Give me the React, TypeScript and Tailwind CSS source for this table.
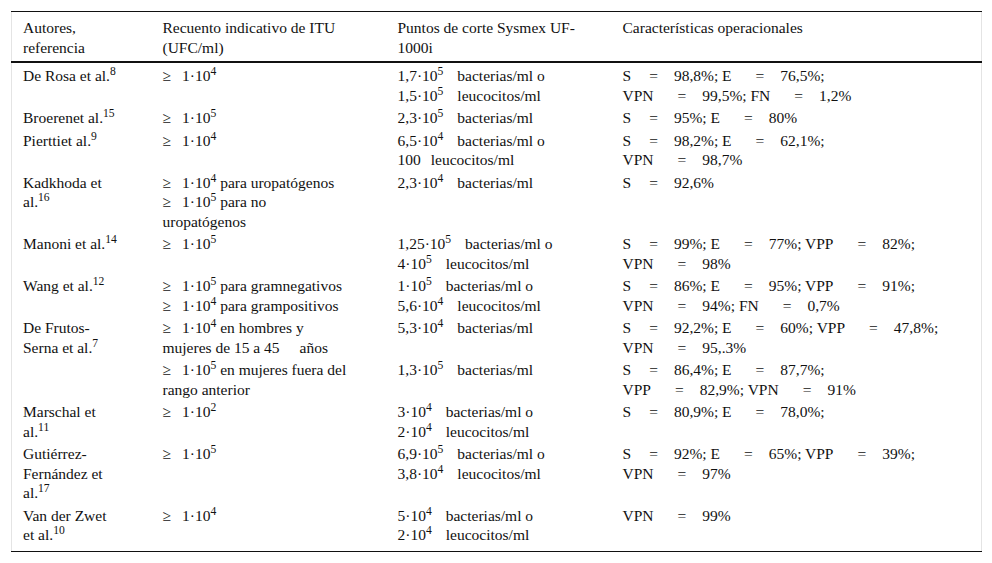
import React from "react";

const S = ({ children }: { children: React.ReactNode }) => <sup>{children}</sup>;
const Ge = () => <span className="inline-block w-[11px]" />;
const Gc = () => <span className="inline-block w-[14px]" />;
const GlS = () => <span className="inline-block w-[18px]" />;
const Gl = () => <span className="inline-block w-[24px]" />;
const Gr = () => <span className="inline-block w-[16px]" />;

const Eq = ({ l, r }: { l: string; r: string }) => (
  <>
    {l}
    {l === "S" ? <GlS /> : <Gl />}=<Gr />
    {r}
  </>
);

const Ge1 = ({ n, e, tail }: { n: string; e: string; tail?: string }) => (
  <>
    ≥<Ge />
    {n}·10<S>{e}</S>
    {tail}
  </>
);

const C3 = ({ n, e, w }: { n: string; e: string; w: string }) => (
  <>
    {n}·10<S>{e}</S>
    <Gc />
    {w}
  </>
);

type Row = React.ReactNode[][];

const rows: Row[] = [
  [
    [<>De Rosa et al.<S>8</S></>],
    [<Ge1 n="1" e="4" />],
    [<C3 n="1,7" e="5" w="bacterias/ml o" />, <C3 n="1,5" e="5" w="leucocitos/ml" />],
    [
      <><Eq l="S" r="98,8%" />; <Eq l="E" r="76,5%;" /></>,
      <><Eq l="VPN" r="99,5%" />; <Eq l="FN" r="1,2%" /></>,
    ],
  ],
  [
    [<>Broerenet al.<S>15</S></>],
    [<Ge1 n="1" e="5" />],
    [<C3 n="2,3" e="5" w="bacterias/ml" />],
    [<><Eq l="S" r="95%" />; <Eq l="E" r="80%" /></>],
  ],
  [
    [<>Pierttiet al.<S>9</S></>],
    [<Ge1 n="1" e="4" />],
    [<C3 n="6,5" e="4" w="bacterias/ml o" />, <>100<span className="inline-block w-[10px]" />leucocitos/ml</>],
    [<><Eq l="S" r="98,2%" />; <Eq l="E" r="62,1%;" /></>, <Eq l="VPN" r="98,7%" />],
  ],
  [
    [<>Kadkhoda et</>, <>al.<S>16</S></>],
    [<Ge1 n="1" e="4" tail=" para uropatógenos" />, <Ge1 n="1" e="5" tail=" para no" />, <>uropatógenos</>],
    [<C3 n="2,3" e="4" w="bacterias/ml" />],
    [<Eq l="S" r="92,6%" />],
  ],
  [
    [<>Manoni et al.<S>14</S></>],
    [<Ge1 n="1" e="5" />],
    [<C3 n="1,25" e="5" w="bacterias/ml o" />, <C3 n="4" e="5" w="leucocitos/ml" />],
    [
      <><Eq l="S" r="99%" />; <Eq l="E" r="77%" />; <Eq l="VPP" r="82%;" /></>,
      <Eq l="VPN" r="98%" />,
    ],
  ],
  [
    [<>Wang et al.<S>12</S></>],
    [<Ge1 n="1" e="5" tail=" para gramnegativos" />, <Ge1 n="1" e="4" tail=" para grampositivos" />],
    [<C3 n="1" e="5" w="bacterias/ml o" />, <C3 n="5,6" e="4" w="leucocitos/ml" />],
    [
      <><Eq l="S" r="86%" />; <Eq l="E" r="95%" />; <Eq l="VPP" r="91%;" /></>,
      <><Eq l="VPN" r="94%" />; <Eq l="FN" r="0,7%" /></>,
    ],
  ],
  [
    [<>De Frutos-</>, <>Serna et al.<S>7</S></>],
    [<Ge1 n="1" e="4" tail=" en hombres y" />, <>mujeres de 15 a 45<span className="inline-block w-[20px]" />años</>],
    [<C3 n="5,3" e="4" w="bacterias/ml" />],
    [
      <><Eq l="S" r="92,2%" />; <Eq l="E" r="60%" />; <Eq l="VPP" r="47,8%;" /></>,
      <Eq l="VPN" r="95,.3%" />,
    ],
  ],
  [
    [],
    [<Ge1 n="1" e="5" tail=" en mujeres fuera del" />, <>rango anterior</>],
    [<C3 n="1,3" e="5" w="bacterias/ml" />],
    [
      <><Eq l="S" r="86,4%" />; <Eq l="E" r="87,7%;" /></>,
      <><Eq l="VPP" r="82,9%" />; <Eq l="VPN" r="91%" /></>,
    ],
  ],
  [
    [<>Marschal et</>, <>al.<S>11</S></>],
    [<Ge1 n="1" e="2" />],
    [<C3 n="3" e="4" w="bacterias/ml o" />, <C3 n="2" e="4" w="leucocitos/ml" />],
    [<><Eq l="S" r="80,9%" />; <Eq l="E" r="78,0%;" /></>],
  ],
  [
    [<>Gutiérrez-</>, <>Fernández et</>, <>al.<S>17</S></>],
    [<Ge1 n="1" e="5" />],
    [<C3 n="6,9" e="5" w="bacterias/ml o" />, <C3 n="3,8" e="4" w="leucocitos/ml" />],
    [
      <><Eq l="S" r="92%" />; <Eq l="E" r="65%" />; <Eq l="VPP" r="39%;" /></>,
      <Eq l="VPN" r="97%" />,
    ],
  ],
  [
    [<>Van der Zwet</>, <>et al.<S>10</S></>],
    [<Ge1 n="1" e="4" />],
    [<C3 n="5" e="4" w="bacterias/ml o" />, <C3 n="2" e="4" w="leucocitos/ml" />],
    [<Eq l="VPN" r="99%" />],
  ],
];

const Lines = ({ lines }: { lines: React.ReactNode[] }) => (
  <>
    {lines.map((l, i) => (
      <div key={i} className="whitespace-nowrap">
        {l}
      </div>
    ))}
  </>
);

const tdClass = (i: number, n: number) =>
  i === 0
    ? "align-top pl-[11px] pt-[3px] pb-[2px]"
    : i === n - 1
      ? "align-top pl-[11px] pt-[1px] pb-[6px]"
      : "align-top pl-[11px] pt-[1px] pb-[2px]";

export default function App() {
  return (
    <div className="bg-white w-[992px] h-[563px] pt-[11px] px-[11px] font-['Liberation_Serif',serif] text-[15.5px] leading-[19.5px] text-[#111]">
      <table className="table-fixed w-[970px] border-collapse border-x border-x-[#e4e4e4]">
        <colgroup>
          <col className="w-[140px]" />
          <col className="w-[235px]" />
          <col className="w-[225px]" />
          <col className="w-[370px]" />
        </colgroup>
        <thead>
          <tr className="border-t border-t-[#111] border-b-2 border-b-[#111]">
            <th className="text-left font-normal align-top pl-[11px] pt-[6px] pb-[4px]">
              <div>Autores,</div>
              <div>referencia</div>
            </th>
            <th className="text-left font-normal align-top pl-[11px] pt-[6px] pb-[4px]">
              <div>Recuento indicativo de ITU</div>
              <div>(UFC/ml)</div>
            </th>
            <th className="text-left font-normal align-top pl-[11px] pt-[6px] pb-[4px]">
              <div>Puntos de corte Sysmex UF-</div>
              <div>1000i</div>
            </th>
            <th className="text-left font-normal align-top pl-[11px] pt-[6px] pb-[4px]">
              <div>Características operacionales</div>
            </th>
          </tr>
        </thead>
        <tbody className="border-b border-b-[#111]">
          {rows.map((r, i) => (
            <tr key={i}>
              {r.map((c, j) => (
                <td key={j} className={tdClass(i, rows.length)}>
                  <Lines lines={c} />
                </td>
              ))}
            </tr>
          ))}
        </tbody>
      </table>
    </div>
  );
}
